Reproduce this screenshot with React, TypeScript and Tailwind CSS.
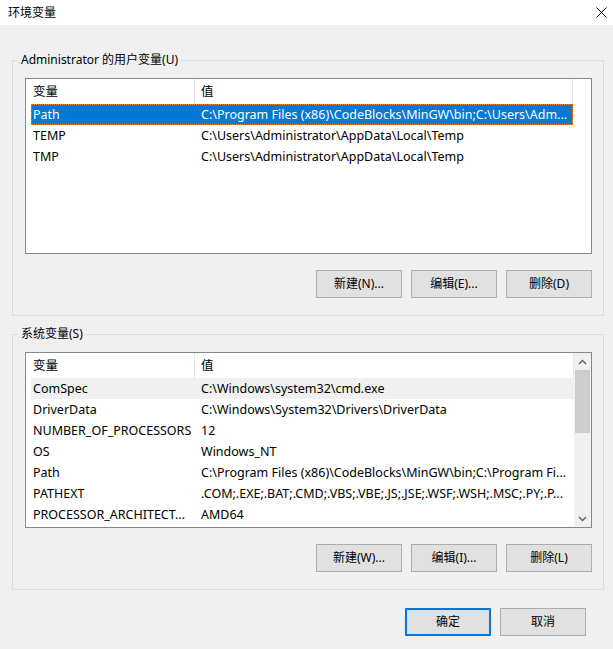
import React from 'react';

const font = { fontFamily: '"Noto Sans", "Noto Sans CJK SC", sans-serif' };

type Row = { name: string; value: string };

const userVars: Row[] = [
  { name: 'Path', value: 'C:\\Program Files (x86)\\CodeBlocks\\MinGW\\bin;C:\\Users\\Adm...' },
  { name: 'TEMP', value: 'C:\\Users\\Administrator\\AppData\\Local\\Temp' },
  { name: 'TMP', value: 'C:\\Users\\Administrator\\AppData\\Local\\Temp' },
];

const sysVars: Row[] = [
  { name: 'ComSpec', value: 'C:\\Windows\\system32\\cmd.exe' },
  { name: 'DriverData', value: 'C:\\Windows\\System32\\Drivers\\DriverData' },
  { name: 'NUMBER_OF_PROCESSORS', value: '12' },
  { name: 'OS', value: 'Windows_NT' },
  { name: 'Path', value: 'C:\\Program Files (x86)\\CodeBlocks\\MinGW\\bin;C:\\Program Fi...' },
  { name: 'PATHEXT', value: '.COM;.EXE;.BAT;.CMD;.VBS;.VBE;.JS;.JSE;.WSF;.WSH;.MSC;.PY;.P...' },
  { name: 'PROCESSOR_ARCHITECT...', value: 'AMD64' },
];

const Button: React.FC<{ label: string; primary?: boolean }> = ({ label, primary }) => (
  <button
    className={
      primary
        ? 'w-[86px] h-[28px] bg-[#e1e1e1] border-2 border-[#0078d7] text-[12px] text-black'
        : 'w-[86px] h-[28px] bg-[#e1e1e1] border border-[#adadad] text-[12px] text-black'
    }
  >
    {label}
  </button>
);

const GroupBox: React.FC<{ title: string; children: React.ReactNode }> = ({ title, children }) => (
  <div className="relative border border-[#dcdcdc] pl-[12px] pr-[11px] pt-[17px] pb-[17px]">
    <span className="absolute left-[5px] -top-[9px] bg-[#f0f0f0] px-[3px] text-[12px] leading-[16px] text-black">
      {title}
    </span>
    {children}
  </div>
);

const ListView: React.FC<{ rows: Row[]; selected?: number; hover?: number; scroll?: boolean }> = ({
  rows,
  selected,
  hover,
  scroll,
}) => (
  <div className="flex h-[176px] border border-[#828790] bg-white">
    <div className="flex-1 flex flex-col pl-[5px] overflow-hidden">
      <div className="flex h-[25px] shrink-0 items-center text-[12.5px] text-black">
        <div className="w-[164px] h-full flex items-center pt-[1px] px-[2px] border-r border-[#e5e5e5]">变量</div>
        <div className="flex-1 h-full flex items-center pt-[1px] px-[6px] border-r border-[#e5e5e5]">值</div>
      </div>
      {rows.map((r, i) => (
        <div
          key={r.name + i}
          className={
            i === selected
              ? 'flex h-[21px] shrink-0 items-center pt-[1px] text-[12.5px] bg-[#0078d7] text-white outline-1 outline-dotted outline-[#f68a1e] -outline-offset-1'
              : i === hover
              ? 'flex h-[21px] shrink-0 items-center pt-[1px] text-[12.5px] bg-[#f0f0f0] text-black'
              : 'flex h-[21px] shrink-0 items-center pt-[1px] text-[12.5px] text-black'
          }
        >
          <div className="w-[164px] px-[2px] whitespace-nowrap overflow-hidden">{r.name}</div>
          <div className="flex-1 px-[6px] whitespace-nowrap overflow-hidden">{r.value}</div>
        </div>
      ))}
    </div>
    {scroll ? (
      <div className="w-[17px] flex flex-col bg-[#f0f0f0]">
        <div className="h-[17px] flex items-center justify-center">
          <svg width="9" height="6" viewBox="0 0 9 6">
            <path d="M1 5 L4.5 1.5 L8 5" fill="none" stroke="#606060" strokeWidth="1.4" />
          </svg>
        </div>
        <div className="mx-[1px] h-[63px] bg-[#cdcdcd]" />
        <div className="flex-1" />
        <div className="h-[17px] flex items-center justify-center">
          <svg width="9" height="6" viewBox="0 0 9 6">
            <path d="M1 1 L4.5 4.5 L8 1" fill="none" stroke="#606060" strokeWidth="1.4" />
          </svg>
        </div>
      </div>
    ) : (
      <div className="w-[18px]" />
    )}
  </div>
);

export default function App() {
  return (
    <div className="w-[613px] h-[649px] bg-[#f0f0f0] flex flex-col" style={font}>
      <div className="h-[25px] bg-white flex items-center justify-between pl-[8px] pr-[6px]">
        <span className="text-[12px] text-black">环境变量</span>
        <svg width="11" height="11" viewBox="0 0 11 11">
          <path d="M0.5 0.5 L10.5 10.5 M10.5 0.5 L0.5 10.5" stroke="#000" strokeWidth="1" />
        </svg>
      </div>
      <div className="flex flex-col pl-[12px] pr-[9px] pt-[35px]">
        <GroupBox title="Administrator 的用户变量(U)">
          <ListView rows={userVars} selected={0} />
          <div className="flex justify-end gap-[9px] mt-[16px]">
            <Button label="新建(N)..." />
            <Button label="编辑(E)..." />
            <Button label="删除(D)" />
          </div>
        </GroupBox>
        <div className="h-[18px]" />
        <GroupBox title="系统变量(S)">
          <ListView rows={sysVars} hover={0} scroll />
          <div className="flex justify-end gap-[9px] mt-[16px]">
            <Button label="新建(W)..." />
            <Button label="编辑(I)..." />
            <Button label="删除(L)" />
          </div>
        </GroupBox>
        <div className="flex justify-end gap-[9px] mt-[18px] pr-[18px]">
          <Button label="确定" primary />
          <Button label="取消" />
        </div>
      </div>
    </div>
  );
}
